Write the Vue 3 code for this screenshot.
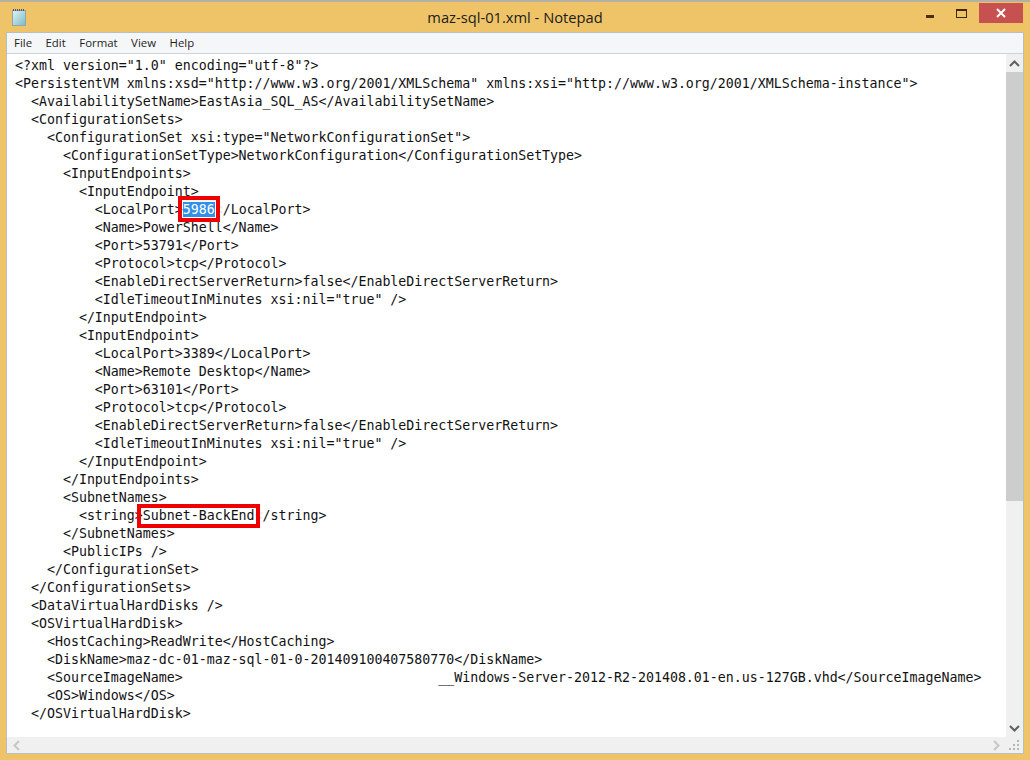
<script setup>
const lines = [
  '<?xml version="1.0" encoding="utf-8"?>',
  '<PersistentVM xmlns:xsd="http://www.w3.org/2001/XMLSchema" xmlns:xsi="http://www.w3.org/2001/XMLSchema-instance">',
  '  <AvailabilitySetName>EastAsia_SQL_AS</AvailabilitySetName>',
  '  <ConfigurationSets>',
  '    <ConfigurationSet xsi:type="NetworkConfigurationSet">',
  '      <ConfigurationSetType>NetworkConfiguration</ConfigurationSetType>',
  '      <InputEndpoints>',
  '        <InputEndpoint>',
  'port',
  '          <Name>PowerShell</Name>',
  '          <Port>53791</Port>',
  '          <Protocol>tcp</Protocol>',
  '          <EnableDirectServerReturn>false</EnableDirectServerReturn>',
  '          <IdleTimeoutInMinutes xsi:nil="true" />',
  '        </InputEndpoint>',
  '        <InputEndpoint>',
  '          <LocalPort>3389</LocalPort>',
  '          <Name>Remote Desktop</Name>',
  '          <Port>63101</Port>',
  '          <Protocol>tcp</Protocol>',
  '          <EnableDirectServerReturn>false</EnableDirectServerReturn>',
  '          <IdleTimeoutInMinutes xsi:nil="true" />',
  '        </InputEndpoint>',
  '      </InputEndpoints>',
  '      <SubnetNames>',
  'subnet',
  '      </SubnetNames>',
  '      <PublicIPs />',
  '    </ConfigurationSet>',
  '  </ConfigurationSets>',
  '  <DataVirtualHardDisks />',
  '  <OSVirtualHardDisk>',
  '    <HostCaching>ReadWrite</HostCaching>',
  '    <DiskName>maz-dc-01-maz-sql-01-0-201409100407580770</DiskName>',
  '    <SourceImageName>                                __Windows-Server-2012-R2-201408.01-en.us-127GB.vhd</SourceImageName>',
  '    <OS>Windows</OS>',
  '  </OSVirtualHardDisk>',
]
const menus = ['File', 'Edit', 'Format', 'View', 'Help']
</script>

<template>
  <div class="window">
    <header class="titlebar">
      <svg class="app-icon" width="14" height="17" viewBox="0 0 14 17">
        <defs>
          <linearGradient id="pad" x1="0" y1="0" x2="1" y2="1">
            <stop offset="0" stop-color="#e4f1f3" />
            <stop offset="1" stop-color="#79bcc9" />
          </linearGradient>
        </defs>
        <rect x="0.5" y="1.5" width="13" height="15" fill="url(#pad)" stroke="#8fa6ad" />
        <path d="M1 1h12" stroke="#555" stroke-width="2" stroke-dasharray="1 1" />
      </svg>
      <div class="title">maz-sql-01.xml - Notepad</div>
      <div class="controls">
        <div class="ctl"><span class="min"></span></div>
        <div class="ctl"><span class="max"></span></div>
        <div class="close">
          <svg width="10" height="10" viewBox="0 0 10 10"><path d="M1 1l8 8M9 1l-8 8" stroke="#fff" stroke-width="2" /></svg>
        </div>
      </div>
    </header>
    <div class="client">
      <nav class="menubar">
        <span v-for="m in menus" :key="m">{{ m }}</span>
      </nav>
      <div class="body">
        <main class="editor">
          <pre class="code"><template v-for="(l, i) in lines" :key="i"><div class="ln" v-if="l === 'port'">          &lt;LocalPort&gt;<span class="sel">5986</span><span class="gone">&lt;</span>/LocalPort&gt;</div><div class="ln" v-else-if="l === 'subnet'">        &lt;string&gt;Subnet-BackEnd<span class="gone">&lt;</span>/string&gt;</div><div class="ln" v-else>{{ l }}</div></template></pre>
          <div class="mark mark-a"></div>
          <div class="mark mark-b"></div>
        </main>
        <aside class="vbar">
          <div class="arrow">
            <svg width="11" height="7" viewBox="0 0 11 7"><path d="M1 6l4.5-4.5L10 6" fill="none" stroke="#606060" stroke-width="2" /></svg>
          </div>
          <div class="thumb"></div>
          <div class="track"></div>
          <div class="arrow">
            <svg width="11" height="7" viewBox="0 0 11 7"><path d="M1 1l4.5 4.5L10 1" fill="none" stroke="#606060" stroke-width="2" /></svg>
          </div>
        </aside>
      </div>
      <div class="hbar">
        <svg width="7" height="11" viewBox="0 0 7 11"><path d="M6 1L1.5 5.5 6 10" fill="none" stroke="#c4c6c8" stroke-width="2" /></svg>
        <svg class="right" width="7" height="11" viewBox="0 0 7 11"><path d="M1 1l4.5 4.5L1 10" fill="none" stroke="#c4c6c8" stroke-width="2" /></svg>
        <svg class="grip" width="12" height="12" viewBox="0 0 12 12"><path d="M9 1h2v2H9zM5 5h2v2H5zM9 5h2v2H9zM1 9h2v2H1zM5 9h2v2H5zM9 9h2v2H9z" fill="#b4b6b8" /></svg>
      </div>
    </div>
  </div>
</template>

<style scoped>
.window {
  width: 1030px;
  height: 760px;
  box-sizing: border-box;
  background: #efc468;
  border-top: 2px solid #b5b0a4;
  padding: 0 7px 7px;
  display: flex;
  flex-direction: column;
  overflow: hidden;
}
.titlebar {
  height: 31px;
  flex: none;
  display: flex;
  align-items: center;
  position: relative;
}
.app-icon { margin: -1px 0 0 5px; }
.title {
  position: absolute;
  left: 0;
  right: 0;
  text-align: center;
  font: 14.7px "Open Sans", "Noto Sans", sans-serif;
  color: #1c1c1c;
  top: 6px;
  line-height: 18px;
}
.controls {
  margin-left: auto;
  display: flex;
  align-self: flex-start;
  height: 21px;
  margin-top: 1px;
  position: relative;
}
.ctl { width: 29px; position: relative; }
.min { position: absolute; left: 5px; top: 12px; width: 8px; height: 3px; background: #4a2f08; }
.max { position: absolute; left: 6px; top: 6px; width: 9px; height: 6px; border: 1px solid #3d2808; border-top-width: 2px; }
.close {
  width: 44px;
  height: 20px;
  background: #c75050;
  display: flex;
  align-items: center;
  justify-content: center;
}
.client {
  flex: 1;
  display: flex;
  flex-direction: column;
  min-height: 0;
  background: #fff;
  box-shadow: 0 0 0 1px #b7bfc2;
}
.menubar {
  height: 20px;
  flex: none;
  background: #f5f6f7;
  border-bottom: 1px solid #c8d4de;
  display: flex;
  gap: 13.5px;
  padding-left: 7px;
  font: 11.4px/20px "Open Sans", "Noto Sans", sans-serif;
  color: #1e1e1e;
}
.body { flex: 1; display: flex; min-height: 0; }
.editor { flex: 1; position: relative; overflow: hidden; min-width: 0; }
.code {
  margin: 0;
  padding: 3px 0 0 8px;
  font: 13.28px/18px "DejaVu Sans Mono", "Liberation Mono", monospace;
  color: #111;
  white-space: pre;
}
.ln { height: 18px; }
.sel { background: #3390e8; color: #fff; }
.gone { color: #e4e4e4; }
.mark { position: absolute; border: 4px solid #ee0000; box-sizing: border-box; }
.mark-a { left: 171px; top: 142px; width: 42px; height: 26px; }
.mark-b { left: 130px; top: 450px; width: 123px; height: 24px; }
.vbar {
  width: 17px;
  flex: none;
  background: #f0f0f0;
  display: flex;
  flex-direction: column;
}
.arrow { height: 18px; flex: none; display: flex; align-items: center; justify-content: center; }
.thumb { height: 429px; flex: none; background: #cdcdcd; }
.track { flex: 1; }
.hbar {
  height: 16px;
  flex: none;
  background: #f0f0f0;
  display: flex;
  align-items: center;
  padding-left: 6px;
  position: relative;
}
.right { position: absolute; right: 23px; top: 3px; }
.grip { position: absolute; right: 3px; bottom: 2px; }
</style>

<style>
html, body { margin: 0; background: #efc468; }
</style>
